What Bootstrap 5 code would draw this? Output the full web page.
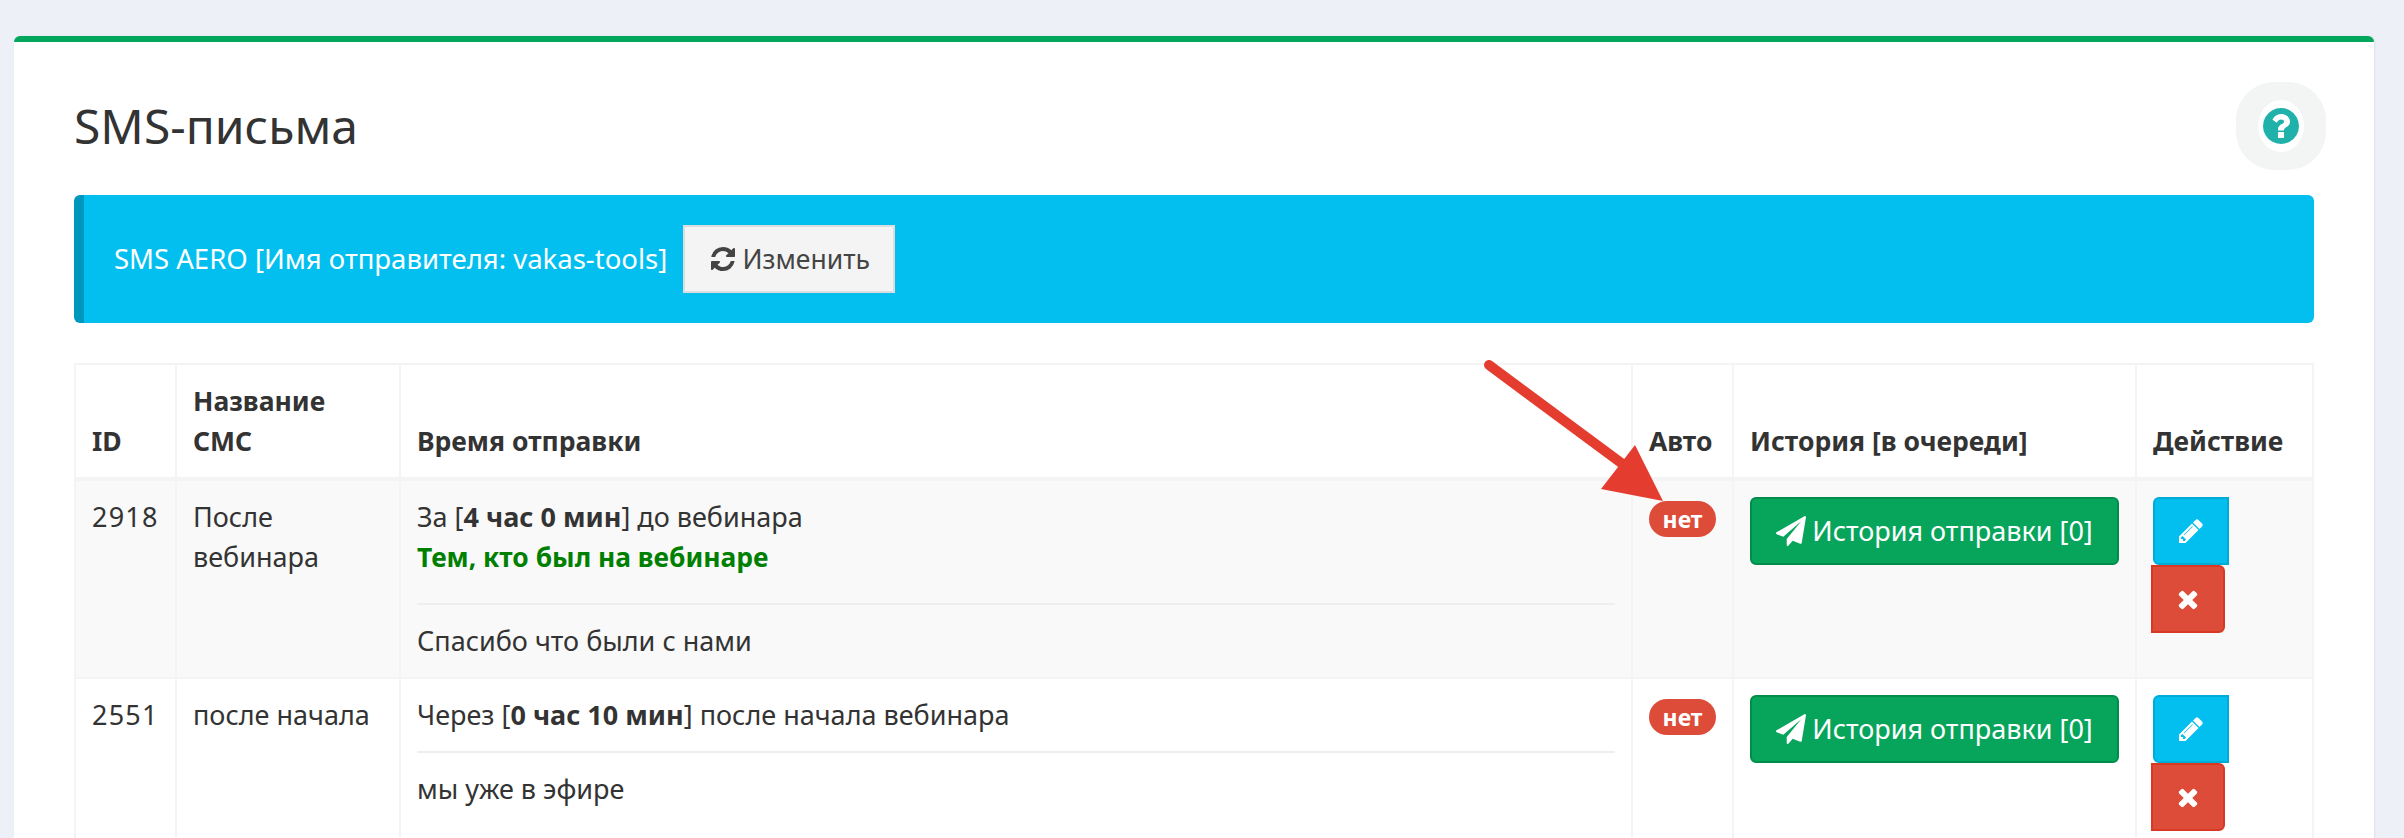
<!DOCTYPE html>
<html lang="ru">
<head>
    <meta charset="UTF-8">
    <meta name="viewport" content="width=device-width, initial-scale=1.0">
    <title>SMS-письма</title>
    <link href="https://cdn.jsdelivr.net/npm/bootstrap@5.3.0/dist/css/bootstrap.min.css" rel="stylesheet">
    <style>
        html, body { height: 100%; overflow: hidden; }
        body {
            background: #edf0f7;
            color: #333;
            font-family: "Noto Sans", "Liberation Sans", sans-serif;
            font-size: 27px;
            line-height: 40px;
            position: relative;
        }
        .page-wrap { padding: 36px 30px 0 14px; }
        .sms-box {
            border: 0;
            border-top: 6px solid #03a75b;
            border-radius: 6px;
            box-shadow: 1px 0 2px rgba(40, 60, 110, .08);
        }
        .sms-box-body { padding: 40px 60px 0; }
        .sms-title { font-size: 48px; line-height: 88px; font-weight: 400; color: #333; margin: 0; }
        .help-btn {
            width: 90px; height: 88px;
            margin-right: -12px;
            background: #f3f4f4;
            border-radius: 38px;
        }
        .help-ring { width: 46px; height: 52px; background: #fff; border-radius: 50%; }
        .help-ring svg { width: 42px; height: 42px; fill: #20b2aa; }
        .sender-alert {
            height: 128px;
            margin: 25px 0 40px;
            padding: 0 30px;
            background: #03bff0;
            color: #fff;
            border: 0;
            border-left: 10px solid #0097bc;
            border-radius: 6px;
            gap: 16px;
            font-size: 27.5px;
        }
        .change-btn {
            height: 68px;
            width: 212px;
            padding: 0;
            background: #f4f4f4;
            color: #444;
            border: 2px solid #ddd;
            border-radius: 0;
            font-size: 26.5px;
            line-height: 40px;
            gap: 6px;
        }
        .change-btn svg { width: 28px; height: 28px; fill: #444; }
        .sms-table {
            --bs-table-striped-bg: #f9f9f9;
            --bs-table-striped-color: #333;
            --bs-table-color: #333;
            --bs-table-bg: transparent;
            table-layout: fixed;
            width: 2240px;
            margin: 0;
            border-color: #f4f4f4;
        }
        .sms-table > :not(caption) > * > * { padding: 16px; border-width: 2px; border-color: #f4f4f4; color: #333; }
        .sms-table thead th { border-bottom-width: 4px; vertical-align: bottom; font-weight: 700; font-size: 26.5px; }
        .c-id { width: 101px; }
        .c-name { width: 224px; }
        .c-auto { width: 101px; }
        .c-hist { width: 403px; }
        .c-act { width: 177px; }
        .id-num { letter-spacing: 1.2px; }
        .target-green { color: #008000; font-weight: 700; font-size: 26.4px; }
        .msg-rule { margin: 16px 0; border: 0; border-top: 2px solid #eee; opacity: 1; }
        .msg-rule-far { margin-top: 26px; }
        .auto-pill {
            display: inline-block;
            background: #dd4b39;
            color: #fff;
            font-size: 23px;
            line-height: 36px;
            font-weight: 700;
            width: 67px;
            padding: 0;
            border-radius: 18px;
            vertical-align: top;
            margin-top: 4px;
        }
        .hist-btn {
            height: 68px;
            width: 369px;
            padding: 0;
            background: #06a55b;
            border: 2px solid #008d4c;
            color: #fff;
            border-radius: 6px;
            font-size: 27px;
            line-height: 40px;
            gap: 6px;
        }
        .hist-btn svg { width: 30px; height: 30px; fill: #fff; }
        .act-group { width: 143px; flex-wrap: wrap; }
        .act-group > .act-btn { flex: none; height: 68px; padding: 0; color: #fff; display: flex; align-items: center; justify-content: center; }
        .act-group > .act-btn svg { width: 28px; height: 28px; fill: #fff; }
        .act-group > .act-edit { width: 76px; background: #03bff0; border: 2px solid #00acd6; border-radius: 6px 0 0 6px; }
        .btn-group.act-group > .btn.act-btn.act-del { width: 74px; margin-left: -2px; background: #dd4b39; border: 2px solid #d73925; border-radius: 0 6px 6px 0; }
        .red-arrow { position: absolute; left: 0; top: 0; pointer-events: none; }
    </style>
</head>
<body>
    <div class="page-wrap">
        <div class="card sms-box">
            <div class="sms-box-body">
                <div class="d-flex justify-content-between align-items-center">
                    <h1 class="sms-title">SMS-письма</h1>
                    <div class="help-btn d-flex align-items-center justify-content-center">
                        <div class="help-ring d-flex align-items-center justify-content-center">
                            <svg viewBox="0 0 1792 1792"><path d="M1024 1376v-192q0-14-9-23t-23-9h-192q-14 0-23 9t-9 23v192q0 14 9 23t23 9h192q14 0 23-9t9-23zm256-672q0-88-55.500-163t-138.500-116-170-41q-243 0-371 213-15 24 8 42l132 100q7 6 19 6 16 0 25-12 53-68 86-92 34-24 86-24 48 0 85.500 26t37.500 59q0 38-20 61t-68 45q-63 28-115.500 86.500t-52.500 125.500v36q0 14 9 23t23 9h192q14 0 23-9t9-23q0-19 21.500-49.500t54.500-49.500q32-18 49-28.500t46-35 44.500-48 28-60.500 12.500-81zm384 192q0 209-103 385.500t-279.500 279.500-385.500 103-385.500-103-279.500-279.500-103-385.500 103-385.500 279.500-279.500 385.500-103 385.500 103 279.500 279.500 103 385.500z"/></svg>
                        </div>
                    </div>
                </div>

                <div class="alert sender-alert d-flex align-items-center">
                    <span>SMS AERO [Имя отправителя: vakas-tools]</span>
                    <button type="button" class="btn change-btn d-flex align-items-center justify-content-center">
                        <svg viewBox="0 0 1792 1792"><path d="M1639 1056q0 5-1 7-64 268-268 434.500t-478 166.500q-146 0-282.500-55t-243.500-157l-129 129q-19 19-45 19t-45-19-19-45v-448q0-26 19-45t45-19h448q26 0 45 19t19 45-19 45l-137 137q71 66 161 102t187 36q134 0 250-65t186-179q11-17 53-117 8-23 30-23h192q13 0 22.500 9.500t9.500 22.500zm25-800v448q0 26-19 45t-45 19h-448q-26 0-45-19t-19-45 19-45l138-138q-148-137-349-137-134 0-250 65t-186 179q-11 17-53 117-8 23-30 23h-199q-13 0-22.500-9.500t-9.500-22.500v-7q65-268 270-434.500t480-166.500q146 0 284 55.500t245 156.500l130-129q19-19 45-19t45 19 19 45z"/></svg>
                        <span>Изменить</span>
                    </button>
                </div>

                <table class="table table-bordered table-striped sms-table">
                    <thead>
                        <tr>
                            <th class="c-id">ID</th>
                            <th class="c-name">Название СМС</th>
                            <th>Время отправки</th>
                            <th class="c-auto">Авто</th>
                            <th class="c-hist">История [в очереди]</th>
                            <th class="c-act">Действие</th>
                        </tr>
                    </thead>
                    <tbody id="sms-rows"></tbody>
                </table>
            </div>
        </div>
    </div>

    <!-- annotation arrow drawn over the screenshot -->
    <svg class="red-arrow" width="2404" height="838" viewBox="0 0 2404 838">
        <line x1="1489" y1="365" x2="1628" y2="468" stroke="#e53c30" stroke-width="10" stroke-linecap="round"/>
        <polygon points="1635,445 1663,501 1601,489" fill="#e53c30"/>
    </svg>

    <script>
        const planeIcon = '<svg viewBox="0 0 1792 1792"><path d="M1764 11q33 24 27 64l-256 1536q-5 29-32 45-14 8-31 8-11 0-24-5l-453-185-242 295q-18 23-49 23-13 0-22-4-19-7-30.500-23.500t-11.500-36.500v-349l864-1059-1069 925-395-162q-37-14-40-55-2-40 32-59l1664-960q15-9 32-9 20 0 36 11z"/></svg>';
        const pencilIcon = '<svg viewBox="0 0 1792 1792"><path d="M491 1536l91-91-235-235-91 91v107h128v128h107zm523-928q0-22-22-22-10 0-17 7l-542 542q-7 7-7 17 0 22 22 22 10 0 17-7l542-542q7-7 7-17zm-54-192l416 416-832 832h-416v-416zm683 96q0 53-37 90l-166 166-416-416 166-165q36-38 90-38 53 0 91 38l235 234q37 39 37 91z"/></svg>';
        const timesIcon = '<svg viewBox="0 0 1792 1792"><path d="M1490 1322q0 40-28 68l-136 136q-28 28-68 28t-68-28l-294-294-294 294q-28 28-68 28t-68-28l-136-136q-28-28-28-68t28-68l294-294-294-294q-28-28-28-68t28-68l136-136q28-28 68-28t68 28l294 294 294-294q28-28 68-28t68 28l136 136q28 28 28 68t-28 68l-294 294 294 294q28 28 28 68z"/></svg>';

        const rows = [
            { id: 2918, name: 'После вебинара', time: 'За [<b>4 час 0 мин</b>] до вебинара', target: 'Тем, кто был на вебинаре', text: 'Спасибо что были с нами' },
            { id: 2551, name: 'после начала', time: 'Через [<b>0 час 10 мин</b>] после начала вебинара', target: '', text: 'мы уже в эфире' }
        ];

        document.getElementById('sms-rows').innerHTML = rows.map(r => `
            <tr>
                <td class="id-num">${r.id}</td>
                <td>${r.name}</td>
                <td>
                    <div>${r.time}</div>
                    ${r.target ? `<div class="target-green">${r.target}</div>` : ''}
                    <hr class="msg-rule ${r.target ? 'msg-rule-far' : ''}">
                    <div>${r.text}</div>
                </td>
                <td><span class="badge auto-pill">нет</span></td>
                <td><button type="button" class="btn hist-btn d-flex align-items-center justify-content-center">${planeIcon}<span>История отправки [0]</span></button></td>
                <td>
                    <div class="btn-group act-group">
                        <button type="button" class="btn act-btn act-edit">${pencilIcon}</button>
                        <button type="button" class="btn act-btn act-del">${timesIcon}</button>
                    </div>
                </td>
            </tr>`).join('');
    </script>

    <script src="https://cdn.jsdelivr.net/npm/bootstrap@5.3.0/dist/js/bootstrap.bundle.min.js"></script>
</body>
</html>
